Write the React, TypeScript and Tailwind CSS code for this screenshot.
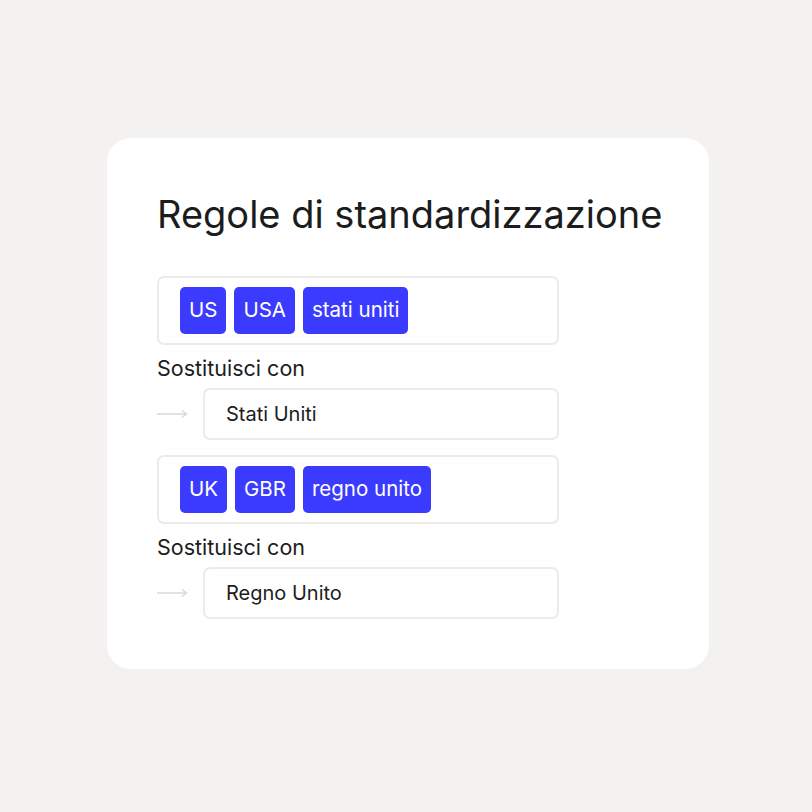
import React from 'react';

interface Rule {
  tags: string[];
  replacement: string;
}

const rules: Rule[] = [
  { tags: ['US', 'USA', 'stati uniti'], replacement: 'Stati Uniti' },
  { tags: ['UK', 'GBR', 'regno unito'], replacement: 'Regno Unito' },
];

const Arrow = () => (
  <svg width="31" height="10" viewBox="0 0 31 10" fill="none" className="shrink-0">
    <path d="M0 5H29M25 1.5L29.5 5L25 8.5" stroke="#d9d9d9" strokeWidth="1.4" />
  </svg>
);

const RuleBlock = ({ rule, first }: { rule: Rule; first: boolean }) => (
  <div className={first ? '' : 'mt-[15px]'}>
    {/* Tags box */}
    <div className="w-[402px] h-[69px] border-2 border-[#ebebeb] rounded-[7px] flex items-center gap-[8px] pl-[21px]">
      {rule.tags.map((t) => (
        <span
          key={t}
          className="h-[47px] px-[9px] flex items-center rounded-[5px] bg-[#3b3bff] text-white text-[20.5px] leading-none"
        >
          {t}
        </span>
      ))}
    </div>

    <div className="mt-[11px] text-[21.5px] leading-[24px] text-[#1c1c1c]">Sostituisci con</div>

    <div className="mt-[8px] flex items-center gap-[15px]">
      <Arrow />
      <div className="w-[356px] h-[52px] border-2 border-[#ebebeb] rounded-[7px] flex items-center pl-[21px] text-[20px] text-[#1c1c1c]">
        {rule.replacement}
      </div>
    </div>
  </div>
);

export default function App() {
  return (
    <div
      className="w-[812px] h-[812px] bg-[#f3f2f0] pt-[138px] pl-[107px]"
      style={{ fontFamily: 'Inter, "Noto Sans", sans-serif' }}
    >
      <div className="w-[602px] h-[531px] bg-white rounded-[24px] pt-[52px] pl-[50px]">
        <h1 className="text-[38px] leading-[48px] text-[#1c1c1c]">
          Regole di standardizzazione
        </h1>
        <div className="mt-[38px]">
          {rules.map((r, i) => (
            <RuleBlock key={r.replacement} rule={r} first={i === 0} />
          ))}
        </div>
      </div>
    </div>
  );
}
